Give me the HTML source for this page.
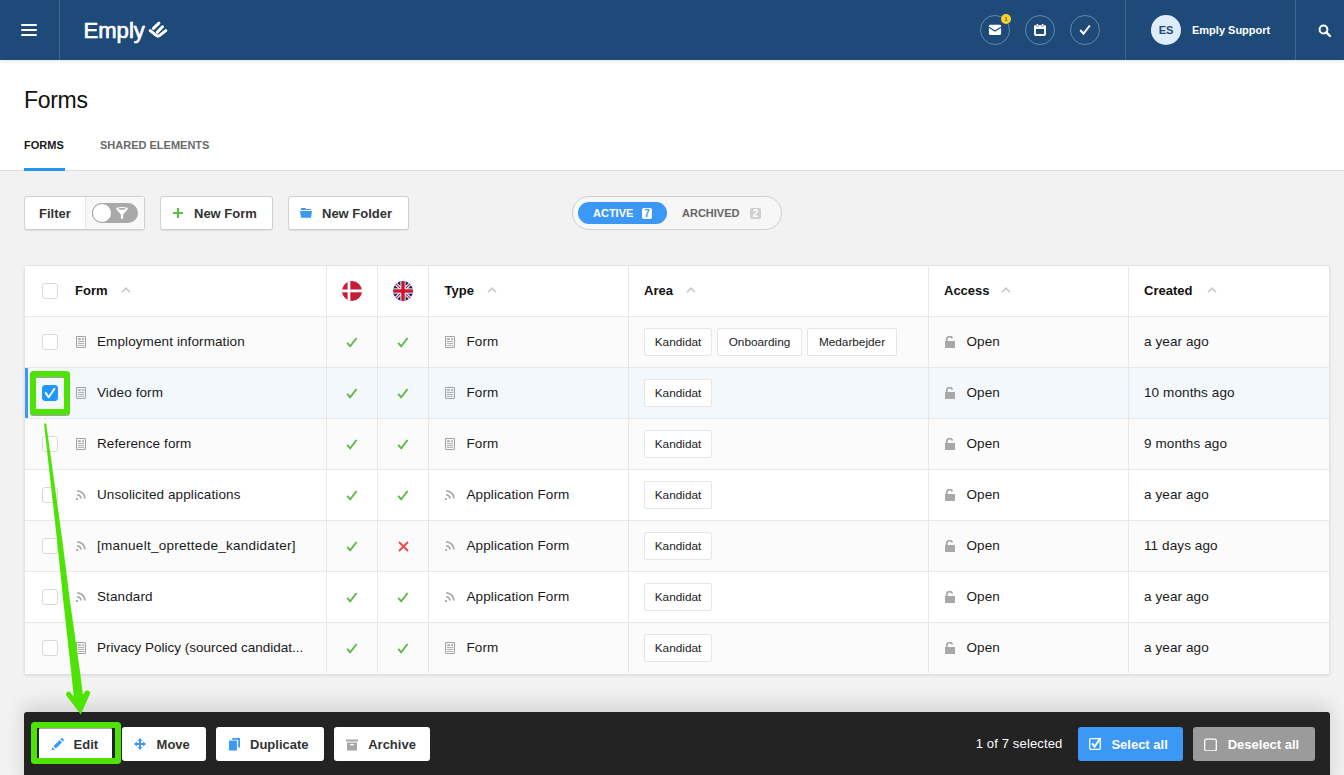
<!DOCTYPE html>
<html><head><meta charset="utf-8">
<style>
*{box-sizing:border-box;margin:0;padding:0}
html,body{width:1344px;height:775px;overflow:hidden;background:#f2f2f2;font-family:"Liberation Sans",sans-serif;color:#1a1a1a}
.abs{position:absolute}
#hdr{position:absolute;left:0;top:0;width:1344px;height:60px;background:#1e4a7a;box-shadow:0 1px 4px rgba(0,0,0,0.12);z-index:2}
.sep{position:absolute;top:0;width:1px;height:60px;background:rgba(255,255,255,0.16)}
.hb{position:absolute;left:21px;width:16px;height:2.4px;background:#fff;border-radius:1px}
.circ{position:absolute;top:15px;width:30px;height:30px;border-radius:50%;border:1px solid rgba(255,255,255,0.32)}
#pagehead{position:absolute;left:0;top:60px;width:1344px;height:111px;background:#fff;border-bottom:1px solid #dedede}
.t{position:absolute;white-space:nowrap}
.btn{position:absolute;top:196px;height:34px;background:#fff;border:1px solid #cfcfcf;border-radius:3px;box-shadow:0 1px 1px rgba(0,0,0,0.08)}
#tbl{position:absolute;left:24px;top:265px;width:1306px;height:409px;background:#fff;border:1px solid #e4e4e4;border-radius:2px;box-shadow:0 2px 3px rgba(0,0,0,0.09)}
.row{position:absolute;left:0;width:1304px;height:51px;border-bottom:1px solid #e8e8e8}
.vl{position:absolute;top:0;width:1px;height:407px;background:#e8e8e8}
.cb{position:absolute;left:17px;width:16px;height:16px;border:1px solid #d9d9d9;border-radius:3px;background:#fff}
.rt{position:absolute;font-size:13.5px;letter-spacing:0.1px;line-height:50px;top:0;white-space:nowrap;color:#1a1a1a}
.hd{position:absolute;font-size:13px;font-weight:700;line-height:50px;top:0;white-space:nowrap;color:#111}
.tag{position:absolute;top:11px;height:28px;background:#fff;border:1px solid #e6e6e6;border-radius:2px;font-size:11.8px;line-height:26px;text-align:center;color:#222}
#bar{position:absolute;left:24px;top:712px;width:1306px;height:80px;background:#232323;border-radius:3px;box-shadow:0 -6px 20px rgba(0,0,0,0.14)}
.bb{position:absolute;top:15px;height:34px;background:#fff;border-radius:3px;font-size:13px;font-weight:700;line-height:34px;color:#333;white-space:nowrap}
</style></head>
<body>
<div id="hdr">
  <div class="hb" style="top:24px"></div>
  <div class="hb" style="top:29px"></div>
  <div class="hb" style="top:34px"></div>
  <div class="sep" style="left:59px"></div>
  <div class="t" style="left:83.5px;top:16px;font-size:22px;font-weight:400;color:#fff;line-height:30px;letter-spacing:0.05px;-webkit-text-stroke:0.7px #fff">Emply</div>
  <svg class="abs" style="left:145px;top:18px" width="26" height="24" viewBox="0 0 26 24"><g stroke="#fff" stroke-width="3" stroke-linecap="round" stroke-linejoin="round" fill="none"><path d="M5.2 12.6 L11.2 17.4 Q13 18.8 14.8 17.4 L20.8 12.6"/><path d="M8.4 10.4 L13.9 5.2"/><path d="M12.3 14.1 L17.5 8.8"/></g></svg>
  <div class="circ" style="left:980px"></div>
  <div class="circ" style="left:1025px"></div>
  <div class="circ" style="left:1070px"></div>
  <svg class="abs" style="left:988px;top:24px" width="14" height="12" viewBox="0 0 14 12"><rect x="0.9" y="0.8" width="12.2" height="10.1" rx="1.4" fill="#fff"/><path d="M0.9 3.2 L7 7 L13.1 3.2" stroke="#1e4a7a" stroke-width="1.1" fill="none"/></svg>
  <div class="abs" style="left:1001px;top:14px;width:10px;height:10px;border-radius:50%;background:#fcd227;font-size:6px;font-weight:700;color:#5d6a5a;text-align:center;line-height:10px">1</div>
  <svg class="abs" style="left:1034px;top:24px" width="12" height="12" viewBox="0 0 12 12"><path d="M1 4 V10.2 Q1 11 1.8 11 H10.2 Q11 11 11 10.2 V4" fill="none" stroke="#fff" stroke-width="2"/><path d="M0 2.2 Q0 1.2 1 1.2 H11 Q12 1.2 12 2.2 V5 H0 Z" fill="#fff"/><rect x="2.6" y="0" width="1.6" height="2" fill="#fff"/><rect x="7.8" y="0" width="1.6" height="2" fill="#fff"/><rect x="2.4" y="1.8" width="2" height="0.7" fill="#1e4a7a"/><rect x="7.6" y="1.8" width="2" height="0.7" fill="#1e4a7a"/></svg>
  <svg class="abs" style="left:1079px;top:24px" width="12" height="12" viewBox="0 0 12 12"><path d="M1.2 6 L4.5 9.6 L10.8 1.5" stroke="#fff" stroke-width="2" fill="none"/></svg>
  <div class="sep" style="left:1125px"></div>
  <div class="abs" style="left:1151px;top:15px;width:30px;height:30px;border-radius:50%;background:#deecfc;color:#1e4a7a;font-size:11px;font-weight:700;text-align:center;line-height:30px">ES</div>
  <div class="t" style="left:1192px;top:15px;font-size:11px;font-weight:700;color:#fff;line-height:30px">Emply Support</div>
  <div class="sep" style="left:1295px"></div>
  <svg class="abs" style="left:1318px;top:23.5px" width="14" height="14" viewBox="0 0 14 14"><circle cx="5.5" cy="5.5" r="3.9" stroke="#fff" stroke-width="2" fill="none"/><path d="M8.3 8.3 L12 12" stroke="#fff" stroke-width="2.4" stroke-linecap="round"/></svg>
</div>

<div id="pagehead">
  <div class="t" style="left:24px;top:22px;font-size:23px;line-height:36px;color:#111;letter-spacing:-0.3px">Forms</div>
  <div class="t" style="left:24px;top:73px;font-size:11px;font-weight:700;line-height:24px;color:#1a1a1a">FORMS</div>
  <div class="t" style="left:100px;top:73px;font-size:11px;font-weight:700;line-height:24px;color:#6a6a6a">SHARED ELEMENTS</div>
  <div class="abs" style="left:24px;top:108px;width:41px;height:3px;background:#2196f3"></div>
</div>

<!-- toolbar -->
<div class="btn" style="left:24px;width:121px">
  <div class="t" style="left:14px;top:1px;font-size:13px;font-weight:700;line-height:32px;color:#333">Filter</div>
  <div class="abs" style="left:60px;top:0;width:59px;height:32px;background:#f8f8f8;border-left:1px solid #e6e6e6"></div>
  <div class="abs" style="left:67px;top:6px;width:46px;height:20px;border-radius:10px;background:#a9a9a9"></div>
  <div class="abs" style="left:67px;top:6px;width:20px;height:20px;border-radius:50%;background:#fff;border:1px solid #a3a3a3"></div>
  <svg class="abs" style="left:91px;top:10px" width="12" height="12" viewBox="0 0 12 12"><path d="M0 1.8 Q0 0 6 0 Q12 0 12 1.8 L7.1 7.4 L7.1 11.8 L4.9 11.8 L4.9 7.4 Z" fill="#fff"/><ellipse cx="6" cy="1.9" rx="3.8" ry="0.8" fill="#a9a9a9"/></svg>
</div>
<div class="btn" style="left:160px;width:113px">
  <svg class="abs" style="left:11px;top:10px" width="12" height="12" viewBox="0 0 12 12"><path d="M6 1 V11 M1 6 H11" stroke="#55c244" stroke-width="2"/></svg>
  <div class="t" style="left:33px;top:1px;font-size:13px;font-weight:700;line-height:32px;color:#333">New Form</div>
</div>
<div class="btn" style="left:288px;width:121px">
  <svg class="abs" style="left:11px;top:10px" width="13" height="12" viewBox="0 0 13 12"><path d="M0.9 1.6 Q0.9 0.9 1.6 0.9 L5.2 0.9 L6 1.9 L10.5 1.9 Q11 1.9 11 2.4 L11 2.9 L0.9 2.9 Z" fill="#3b98f5"/><path d="M0 3.9 L12 3.9 L11 10.8 L1 10.8 Z" fill="#3b98f5"/></svg>
  <div class="t" style="left:33px;top:1px;font-size:13px;font-weight:700;line-height:32px;color:#333">New Folder</div>
</div>

<!-- active/archived -->
<div class="abs" style="left:572px;top:196px;width:210px;height:34px;border-radius:17px;border:1px solid #cfcfcf;background:#f7f7f7">
  <div class="abs" style="left:5px;top:5px;width:89px;height:22px;border-radius:11px;background:#3b98f5"></div>
  <div class="t" style="left:20px;top:5px;font-size:11px;font-weight:700;line-height:22px;color:#fff">ACTIVE</div>
  <div class="abs" style="left:69px;top:11px;width:10px;height:11px;border-radius:2px;background:#fff;color:#3b98f5;font-size:10px;font-weight:700;line-height:11px;text-align:center">7</div>
  <div class="t" style="left:109px;top:5px;font-size:11px;font-weight:700;line-height:22px;color:#666">ARCHIVED</div>
  <div class="abs" style="left:177px;top:11px;width:11px;height:11px;border-radius:2px;background:#cfcfcf;color:#fff;font-size:10px;font-weight:700;line-height:11px;text-align:center">2</div>
</div>

<div id="tbl">
<div class="row" style="top:0;background:#fff"><div class="cb" style="top:17px"></div><div class="hd" style="left:50px">Form</div><svg class="abs" style="left:96px;top:21px" width="10" height="6" viewBox="0 0 10 6"><path d="M1 5.2 L5 1.2 L9 5.2" stroke="#c9c9c9" stroke-width="1.6" fill="none"/></svg><svg class="abs" style="left:317px;top:15px" width="20" height="20" viewBox="0 0 20 20"><defs><clipPath id="cdk"><circle cx="10" cy="10" r="10"/></clipPath></defs><g clip-path="url(#cdk)"><rect width="20" height="20" fill="#c41f38"/><rect x="5.6" y="0" width="2.7" height="20" fill="#fff"/><rect x="0" y="8.5" width="20" height="2.8" fill="#fff"/></g></svg><svg class="abs" style="left:368px;top:15px" width="20" height="20" viewBox="0 0 20 20"><defs><clipPath id="cuk"><circle cx="10" cy="10" r="10"/></clipPath></defs><g clip-path="url(#cuk)"><rect width="20" height="20" fill="#0b2a7c"/><path d="M0 0 L20 20 M20 0 L0 20" stroke="#fff" stroke-width="3.2"/><path d="M0 0 L20 20 M20 0 L0 20" stroke="#cf142b" stroke-width="1.2"/><rect x="7.4" y="0" width="5.2" height="20" fill="#fff"/><rect x="0" y="7.4" width="20" height="5.2" fill="#fff"/><rect x="8.3" y="0" width="3.4" height="20" fill="#cf142b"/><rect x="0" y="8.3" width="20" height="3.4" fill="#cf142b"/></g></svg><div class="hd" style="left:419.5px">Type</div><svg class="abs" style="left:462px;top:21px" width="10" height="6" viewBox="0 0 10 6"><path d="M1 5.2 L5 1.2 L9 5.2" stroke="#c9c9c9" stroke-width="1.6" fill="none"/></svg><div class="hd" style="left:619px">Area</div><svg class="abs" style="left:661px;top:21px" width="10" height="6" viewBox="0 0 10 6"><path d="M1 5.2 L5 1.2 L9 5.2" stroke="#c9c9c9" stroke-width="1.6" fill="none"/></svg><div class="hd" style="left:919px">Access</div><svg class="abs" style="left:976px;top:21px" width="10" height="6" viewBox="0 0 10 6"><path d="M1 5.2 L5 1.2 L9 5.2" stroke="#c9c9c9" stroke-width="1.6" fill="none"/></svg><div class="hd" style="left:1119px">Created</div><svg class="abs" style="left:1182px;top:21px" width="10" height="6" viewBox="0 0 10 6"><path d="M1 5.2 L5 1.2 L9 5.2" stroke="#c9c9c9" stroke-width="1.6" fill="none"/></svg></div>
<div class="row" style="top:51px;background:#fbfbfb;"><div class="cb" style="top:17px"></div><svg class="abs" style="left:51px;top:19px" width="10" height="12" viewBox="0 0 10 12"><rect x="0.55" y="0.55" width="8.9" height="10.9" rx="0.6" fill="none" stroke="#a3a3a3" stroke-width="1.1"/><rect x="2.1" y="2.3" width="2.7" height="1.6" fill="#a3a3a3"/><rect x="6.1" y="2.3" width="1.8" height="1.6" fill="#a3a3a3"/><rect x="2" y="4.9" width="6" height="0.9" fill="#a3a3a3"/><rect x="2" y="6.9" width="6" height="0.9" fill="#a3a3a3"/><rect x="2" y="8.9" width="6" height="0.9" fill="#a3a3a3"/></svg><div class="rt" style="left:72px;">Employment information</div><svg class="abs" style="left:321px;top:20px" width="12" height="11" viewBox="0 0 12 11"><path d="M1.2 5.8 L4.2 9.3 L10.6 1" stroke="#5cb946" stroke-width="1.9" fill="none"/></svg><svg class="abs" style="left:372px;top:20px" width="12" height="11" viewBox="0 0 12 11"><path d="M1.2 5.8 L4.2 9.3 L10.6 1" stroke="#5cb946" stroke-width="1.9" fill="none"/></svg><svg class="abs" style="left:420px;top:19px" width="10" height="12" viewBox="0 0 10 12"><rect x="0.55" y="0.55" width="8.9" height="10.9" rx="0.6" fill="none" stroke="#a3a3a3" stroke-width="1.1"/><rect x="2.1" y="2.3" width="2.7" height="1.6" fill="#a3a3a3"/><rect x="6.1" y="2.3" width="1.8" height="1.6" fill="#a3a3a3"/><rect x="2" y="4.9" width="6" height="0.9" fill="#a3a3a3"/><rect x="2" y="6.9" width="6" height="0.9" fill="#a3a3a3"/><rect x="2" y="8.9" width="6" height="0.9" fill="#a3a3a3"/></svg><div class="rt" style="left:441.5px">Form</div><div class="tag" style="left:619px;width:68px">Kandidat</div><div class="tag" style="left:692px;width:85px">Onboarding</div><div class="tag" style="left:782px;width:90px">Medarbejder</div><svg class="abs" style="left:920px;top:19px" width="11" height="13" viewBox="0 0 11 13"><rect x="0" y="5" width="10" height="7" fill="#a8a8a8"/><path d="M1.8 5.5 L1.8 3.3 A2.8 2.8 0 0 1 7.3 2.6" stroke="#a8a8a8" stroke-width="1.8" fill="none"/></svg><div class="rt" style="left:941.5px">Open</div><div class="rt" style="left:1119px">a year ago</div></div>
<div class="row" style="top:102px;background:#f3f8fd;"><div class="abs" style="left:0;top:0;width:3px;height:50px;background:#3b98f5"></div><div class="cb" style="top:17px;background:#1f97fb;border-color:#1f97fb"><svg class="abs" style="left:-1px;top:-1px" width="16" height="16" viewBox="0 0 16 16"><path d="M3.3 7.4 L6.6 12.2 L12.9 3.3" stroke="#fff" stroke-width="1.9" fill="none" stroke-linejoin="round"/></svg></div><svg class="abs" style="left:51px;top:19px" width="10" height="12" viewBox="0 0 10 12"><rect x="0.55" y="0.55" width="8.9" height="10.9" rx="0.6" fill="none" stroke="#a3a3a3" stroke-width="1.1"/><rect x="2.1" y="2.3" width="2.7" height="1.6" fill="#a3a3a3"/><rect x="6.1" y="2.3" width="1.8" height="1.6" fill="#a3a3a3"/><rect x="2" y="4.9" width="6" height="0.9" fill="#a3a3a3"/><rect x="2" y="6.9" width="6" height="0.9" fill="#a3a3a3"/><rect x="2" y="8.9" width="6" height="0.9" fill="#a3a3a3"/></svg><div class="rt" style="left:72px;">Video form</div><svg class="abs" style="left:321px;top:20px" width="12" height="11" viewBox="0 0 12 11"><path d="M1.2 5.8 L4.2 9.3 L10.6 1" stroke="#5cb946" stroke-width="1.9" fill="none"/></svg><svg class="abs" style="left:372px;top:20px" width="12" height="11" viewBox="0 0 12 11"><path d="M1.2 5.8 L4.2 9.3 L10.6 1" stroke="#5cb946" stroke-width="1.9" fill="none"/></svg><svg class="abs" style="left:420px;top:19px" width="10" height="12" viewBox="0 0 10 12"><rect x="0.55" y="0.55" width="8.9" height="10.9" rx="0.6" fill="none" stroke="#a3a3a3" stroke-width="1.1"/><rect x="2.1" y="2.3" width="2.7" height="1.6" fill="#a3a3a3"/><rect x="6.1" y="2.3" width="1.8" height="1.6" fill="#a3a3a3"/><rect x="2" y="4.9" width="6" height="0.9" fill="#a3a3a3"/><rect x="2" y="6.9" width="6" height="0.9" fill="#a3a3a3"/><rect x="2" y="8.9" width="6" height="0.9" fill="#a3a3a3"/></svg><div class="rt" style="left:441.5px">Form</div><div class="tag" style="left:619px;width:68px">Kandidat</div><svg class="abs" style="left:920px;top:19px" width="11" height="13" viewBox="0 0 11 13"><rect x="0" y="5" width="10" height="7" fill="#a8a8a8"/><path d="M1.8 5.5 L1.8 3.3 A2.8 2.8 0 0 1 7.3 2.6" stroke="#a8a8a8" stroke-width="1.8" fill="none"/></svg><div class="rt" style="left:941.5px">Open</div><div class="rt" style="left:1119px">10 months ago</div></div>
<div class="row" style="top:153px;background:#fbfbfb;"><div class="cb" style="top:17px"></div><svg class="abs" style="left:51px;top:19px" width="10" height="12" viewBox="0 0 10 12"><rect x="0.55" y="0.55" width="8.9" height="10.9" rx="0.6" fill="none" stroke="#a3a3a3" stroke-width="1.1"/><rect x="2.1" y="2.3" width="2.7" height="1.6" fill="#a3a3a3"/><rect x="6.1" y="2.3" width="1.8" height="1.6" fill="#a3a3a3"/><rect x="2" y="4.9" width="6" height="0.9" fill="#a3a3a3"/><rect x="2" y="6.9" width="6" height="0.9" fill="#a3a3a3"/><rect x="2" y="8.9" width="6" height="0.9" fill="#a3a3a3"/></svg><div class="rt" style="left:72px;">Reference form</div><svg class="abs" style="left:321px;top:20px" width="12" height="11" viewBox="0 0 12 11"><path d="M1.2 5.8 L4.2 9.3 L10.6 1" stroke="#5cb946" stroke-width="1.9" fill="none"/></svg><svg class="abs" style="left:372px;top:20px" width="12" height="11" viewBox="0 0 12 11"><path d="M1.2 5.8 L4.2 9.3 L10.6 1" stroke="#5cb946" stroke-width="1.9" fill="none"/></svg><svg class="abs" style="left:420px;top:19px" width="10" height="12" viewBox="0 0 10 12"><rect x="0.55" y="0.55" width="8.9" height="10.9" rx="0.6" fill="none" stroke="#a3a3a3" stroke-width="1.1"/><rect x="2.1" y="2.3" width="2.7" height="1.6" fill="#a3a3a3"/><rect x="6.1" y="2.3" width="1.8" height="1.6" fill="#a3a3a3"/><rect x="2" y="4.9" width="6" height="0.9" fill="#a3a3a3"/><rect x="2" y="6.9" width="6" height="0.9" fill="#a3a3a3"/><rect x="2" y="8.9" width="6" height="0.9" fill="#a3a3a3"/></svg><div class="rt" style="left:441.5px">Form</div><div class="tag" style="left:619px;width:68px">Kandidat</div><svg class="abs" style="left:920px;top:19px" width="11" height="13" viewBox="0 0 11 13"><rect x="0" y="5" width="10" height="7" fill="#a8a8a8"/><path d="M1.8 5.5 L1.8 3.3 A2.8 2.8 0 0 1 7.3 2.6" stroke="#a8a8a8" stroke-width="1.8" fill="none"/></svg><div class="rt" style="left:941.5px">Open</div><div class="rt" style="left:1119px">9 months ago</div></div>
<div class="row" style="top:204px;background:#fff;"><div class="cb" style="top:17px"></div><svg class="abs" style="left:51px;top:20px" width="11" height="11" viewBox="0 0 11 11"><rect x="0" y="8" width="2" height="2" rx="0.6" fill="#a8a8a8"/><path d="M1.2 4.9 A3.7 3.7 0 0 1 4.9 8.6" stroke="#a8a8a8" stroke-width="1.8" fill="none"/><path d="M1.2 0.9 A7.7 7.7 0 0 1 8.9 8.6" stroke="#a8a8a8" stroke-width="1.8" fill="none"/></svg><div class="rt" style="left:72px;">Unsolicited applications</div><svg class="abs" style="left:321px;top:20px" width="12" height="11" viewBox="0 0 12 11"><path d="M1.2 5.8 L4.2 9.3 L10.6 1" stroke="#5cb946" stroke-width="1.9" fill="none"/></svg><svg class="abs" style="left:372px;top:20px" width="12" height="11" viewBox="0 0 12 11"><path d="M1.2 5.8 L4.2 9.3 L10.6 1" stroke="#5cb946" stroke-width="1.9" fill="none"/></svg><svg class="abs" style="left:420px;top:20px" width="11" height="11" viewBox="0 0 11 11"><rect x="0" y="8" width="2" height="2" rx="0.6" fill="#a8a8a8"/><path d="M1.2 4.9 A3.7 3.7 0 0 1 4.9 8.6" stroke="#a8a8a8" stroke-width="1.8" fill="none"/><path d="M1.2 0.9 A7.7 7.7 0 0 1 8.9 8.6" stroke="#a8a8a8" stroke-width="1.8" fill="none"/></svg><div class="rt" style="left:441.5px">Application Form</div><div class="tag" style="left:619px;width:68px">Kandidat</div><svg class="abs" style="left:920px;top:19px" width="11" height="13" viewBox="0 0 11 13"><rect x="0" y="5" width="10" height="7" fill="#a8a8a8"/><path d="M1.8 5.5 L1.8 3.3 A2.8 2.8 0 0 1 7.3 2.6" stroke="#a8a8a8" stroke-width="1.8" fill="none"/></svg><div class="rt" style="left:941.5px">Open</div><div class="rt" style="left:1119px">a year ago</div></div>
<div class="row" style="top:255px;background:#fbfbfb;"><div class="cb" style="top:17px"></div><svg class="abs" style="left:51px;top:20px" width="11" height="11" viewBox="0 0 11 11"><rect x="0" y="8" width="2" height="2" rx="0.6" fill="#a8a8a8"/><path d="M1.2 4.9 A3.7 3.7 0 0 1 4.9 8.6" stroke="#a8a8a8" stroke-width="1.8" fill="none"/><path d="M1.2 0.9 A7.7 7.7 0 0 1 8.9 8.6" stroke="#a8a8a8" stroke-width="1.8" fill="none"/></svg><div class="rt" style="left:72px;letter-spacing:0.27px">[manuelt_oprettede_kandidater]</div><svg class="abs" style="left:321px;top:20px" width="12" height="11" viewBox="0 0 12 11"><path d="M1.2 5.8 L4.2 9.3 L10.6 1" stroke="#5cb946" stroke-width="1.9" fill="none"/></svg><svg class="abs" style="left:373px;top:20px" width="11" height="11" viewBox="0 0 11 11"><path d="M1 1 L10 10 M10 1 L1 10" stroke="#ec4b4b" stroke-width="1.9" fill="none"/></svg><svg class="abs" style="left:420px;top:20px" width="11" height="11" viewBox="0 0 11 11"><rect x="0" y="8" width="2" height="2" rx="0.6" fill="#a8a8a8"/><path d="M1.2 4.9 A3.7 3.7 0 0 1 4.9 8.6" stroke="#a8a8a8" stroke-width="1.8" fill="none"/><path d="M1.2 0.9 A7.7 7.7 0 0 1 8.9 8.6" stroke="#a8a8a8" stroke-width="1.8" fill="none"/></svg><div class="rt" style="left:441.5px">Application Form</div><div class="tag" style="left:619px;width:68px">Kandidat</div><svg class="abs" style="left:920px;top:19px" width="11" height="13" viewBox="0 0 11 13"><rect x="0" y="5" width="10" height="7" fill="#a8a8a8"/><path d="M1.8 5.5 L1.8 3.3 A2.8 2.8 0 0 1 7.3 2.6" stroke="#a8a8a8" stroke-width="1.8" fill="none"/></svg><div class="rt" style="left:941.5px">Open</div><div class="rt" style="left:1119px">11 days ago</div></div>
<div class="row" style="top:306px;background:#fff;"><div class="cb" style="top:17px"></div><svg class="abs" style="left:51px;top:20px" width="11" height="11" viewBox="0 0 11 11"><rect x="0" y="8" width="2" height="2" rx="0.6" fill="#a8a8a8"/><path d="M1.2 4.9 A3.7 3.7 0 0 1 4.9 8.6" stroke="#a8a8a8" stroke-width="1.8" fill="none"/><path d="M1.2 0.9 A7.7 7.7 0 0 1 8.9 8.6" stroke="#a8a8a8" stroke-width="1.8" fill="none"/></svg><div class="rt" style="left:72px;">Standard</div><svg class="abs" style="left:321px;top:20px" width="12" height="11" viewBox="0 0 12 11"><path d="M1.2 5.8 L4.2 9.3 L10.6 1" stroke="#5cb946" stroke-width="1.9" fill="none"/></svg><svg class="abs" style="left:372px;top:20px" width="12" height="11" viewBox="0 0 12 11"><path d="M1.2 5.8 L4.2 9.3 L10.6 1" stroke="#5cb946" stroke-width="1.9" fill="none"/></svg><svg class="abs" style="left:420px;top:20px" width="11" height="11" viewBox="0 0 11 11"><rect x="0" y="8" width="2" height="2" rx="0.6" fill="#a8a8a8"/><path d="M1.2 4.9 A3.7 3.7 0 0 1 4.9 8.6" stroke="#a8a8a8" stroke-width="1.8" fill="none"/><path d="M1.2 0.9 A7.7 7.7 0 0 1 8.9 8.6" stroke="#a8a8a8" stroke-width="1.8" fill="none"/></svg><div class="rt" style="left:441.5px">Application Form</div><div class="tag" style="left:619px;width:68px">Kandidat</div><svg class="abs" style="left:920px;top:19px" width="11" height="13" viewBox="0 0 11 13"><rect x="0" y="5" width="10" height="7" fill="#a8a8a8"/><path d="M1.8 5.5 L1.8 3.3 A2.8 2.8 0 0 1 7.3 2.6" stroke="#a8a8a8" stroke-width="1.8" fill="none"/></svg><div class="rt" style="left:941.5px">Open</div><div class="rt" style="left:1119px">a year ago</div></div>
<div class="row" style="top:357px;background:#fbfbfb;border-bottom:none;"><div class="cb" style="top:17px"></div><svg class="abs" style="left:51px;top:19px" width="10" height="12" viewBox="0 0 10 12"><rect x="0.55" y="0.55" width="8.9" height="10.9" rx="0.6" fill="none" stroke="#a3a3a3" stroke-width="1.1"/><rect x="2.1" y="2.3" width="2.7" height="1.6" fill="#a3a3a3"/><rect x="6.1" y="2.3" width="1.8" height="1.6" fill="#a3a3a3"/><rect x="2" y="4.9" width="6" height="0.9" fill="#a3a3a3"/><rect x="2" y="6.9" width="6" height="0.9" fill="#a3a3a3"/><rect x="2" y="8.9" width="6" height="0.9" fill="#a3a3a3"/></svg><div class="rt" style="left:72px;letter-spacing:0">Privacy Policy (sourced candidat...</div><svg class="abs" style="left:321px;top:20px" width="12" height="11" viewBox="0 0 12 11"><path d="M1.2 5.8 L4.2 9.3 L10.6 1" stroke="#5cb946" stroke-width="1.9" fill="none"/></svg><svg class="abs" style="left:372px;top:20px" width="12" height="11" viewBox="0 0 12 11"><path d="M1.2 5.8 L4.2 9.3 L10.6 1" stroke="#5cb946" stroke-width="1.9" fill="none"/></svg><svg class="abs" style="left:420px;top:19px" width="10" height="12" viewBox="0 0 10 12"><rect x="0.55" y="0.55" width="8.9" height="10.9" rx="0.6" fill="none" stroke="#a3a3a3" stroke-width="1.1"/><rect x="2.1" y="2.3" width="2.7" height="1.6" fill="#a3a3a3"/><rect x="6.1" y="2.3" width="1.8" height="1.6" fill="#a3a3a3"/><rect x="2" y="4.9" width="6" height="0.9" fill="#a3a3a3"/><rect x="2" y="6.9" width="6" height="0.9" fill="#a3a3a3"/><rect x="2" y="8.9" width="6" height="0.9" fill="#a3a3a3"/></svg><div class="rt" style="left:441.5px">Form</div><div class="tag" style="left:619px;width:68px">Kandidat</div><svg class="abs" style="left:920px;top:19px" width="11" height="13" viewBox="0 0 11 13"><rect x="0" y="5" width="10" height="7" fill="#a8a8a8"/><path d="M1.8 5.5 L1.8 3.3 A2.8 2.8 0 0 1 7.3 2.6" stroke="#a8a8a8" stroke-width="1.8" fill="none"/></svg><div class="rt" style="left:941.5px">Open</div><div class="rt" style="left:1119px">a year ago</div></div>
<div class="vl" style="left:301px"></div>
<div class="vl" style="left:352px"></div>
<div class="vl" style="left:403px"></div>
<div class="vl" style="left:603px"></div>
<div class="vl" style="left:903px"></div>
<div class="vl" style="left:1103px"></div>
</div>
<div id="bar">
  <div class="bb" style="left:15px;width:73px">
    <svg class="abs" style="left:12px;top:11px" width="13" height="13" viewBox="0 0 13 13"><path d="M0.6 12.4 L1.4 9.2 L3.8 11.6 Z" fill="#3b98f5"/><path d="M2.4 8.2 L8.6 2 L11 4.4 L4.8 10.6 Z" fill="#3b98f5"/><path d="M9.4 1.2 L10.4 0.2 Q11 -0.2 11.6 0.4 L12.6 1.4 Q13.2 2 12.8 2.6 L11.8 3.6 Z" fill="#3b98f5"/></svg>
    <div class="t" style="left:34.6px;top:1px;line-height:34px">Edit</div>
  </div>
  <div class="bb" style="left:98px;width:84px">
    <svg class="abs" style="left:12px;top:11px" width="12" height="12" viewBox="0 0 12 12"><path d="M6 0 L8.6 2.8 L7 2.8 L7 5 L9.2 5 L9.2 3.4 L12 6 L9.2 8.6 L9.2 7 L7 7 L7 9.2 L8.6 9.2 L6 12 L3.4 9.2 L5 9.2 L5 7 L2.8 7 L2.8 8.6 L0 6 L2.8 3.4 L2.8 5 L5 5 L5 2.8 L3.4 2.8 Z" fill="#3b98f5"/></svg>
    <div class="t" style="left:34.6px;top:1px;line-height:34px">Move</div>
  </div>
  <div class="bb" style="left:192px;width:108px">
    <svg class="abs" style="left:13px;top:11px" width="11" height="13" viewBox="0 0 11 13"><path d="M3.2 0 H11 V9.6 H9.2 V1.8 H3.2 Z" fill="#3b98f5"/><rect x="0" y="2.6" width="7.9" height="9.9" rx="0.4" fill="#3b98f5"/></svg>
    <div class="t" style="left:34px;top:1px;line-height:34px">Duplicate</div>
  </div>
  <div class="bb" style="left:310px;width:96px">
    <svg class="abs" style="left:12px;top:12px" width="12" height="12" viewBox="0 0 12 12"><rect x="0" y="0.5" width="12" height="2" fill="#a8a8a8"/><rect x="1" y="3.5" width="10" height="8" fill="#a8a8a8"/><rect x="4" y="5" width="4" height="1.2" fill="#fff"/></svg>
    <div class="t" style="left:34.2px;top:1px;line-height:34px">Archive</div>
  </div>
  <div class="t" style="left:951.7px;top:15px;font-size:13px;line-height:34px;color:#fff;letter-spacing:0.15px">1 of 7 selected</div>
  <div class="bb" style="left:1054px;width:105px;background:#3b98f5;color:#fff">
    <svg class="abs" style="left:11px;top:10px" width="13" height="13" viewBox="0 0 13 13"><rect x="0.7" y="1.7" width="10.6" height="10.6" rx="1" fill="none" stroke="#fff" stroke-width="1.3"/><path d="M3 6.3 L5.6 9.6 L11.6 1" stroke="#fff" stroke-width="2" fill="none"/></svg>
    <div class="t" style="left:33.4px;top:1px;line-height:34px">Select all</div>
  </div>
  <div class="bb" style="left:1169px;width:122px;background:#9b9b9b;color:#fff">
    <svg class="abs" style="left:10.7px;top:11px" width="13" height="13" viewBox="0 0 13 13"><rect x="0.7" y="1.2" width="11.6" height="11.6" rx="1.5" fill="none" stroke="#fff" stroke-width="1.3"/></svg>
    <div class="t" style="left:34.7px;top:1px;line-height:34px">Deselect all</div>
  </div>
</div>
<svg class="abs" style="left:0;top:0;pointer-events:none" width="1344" height="775" viewBox="0 0 1344 775">
  <rect x="33" y="375" width="34" height="38" rx="0.5" fill="none" stroke="rgba(50,20,60,0.4)" stroke-width="6"/><rect x="33" y="374" width="34" height="38" rx="0.5" fill="none" stroke="#4ee305" stroke-width="6"/>
  <rect x="34" y="726" width="84" height="36" rx="0.5" fill="none" stroke="rgba(50,20,60,0.4)" stroke-width="6"/><rect x="34" y="725" width="84" height="36" rx="0.5" fill="none" stroke="#4ee305" stroke-width="6"/>
  <path d="M44 423.5 L46.2 423.5 L62.3 540 L69.8 600 L79.8 670 L82.9 694.8 L85.5 690.8 Q88.5 689.5 90.5 692.5 L80.8 714.5 L66 695 Q66.2 691 69.5 691.5 L73.7 696.5 L71 670 L63.2 600 L57 540 Z" fill="#4ee305"/>
</svg>
</body></html>
